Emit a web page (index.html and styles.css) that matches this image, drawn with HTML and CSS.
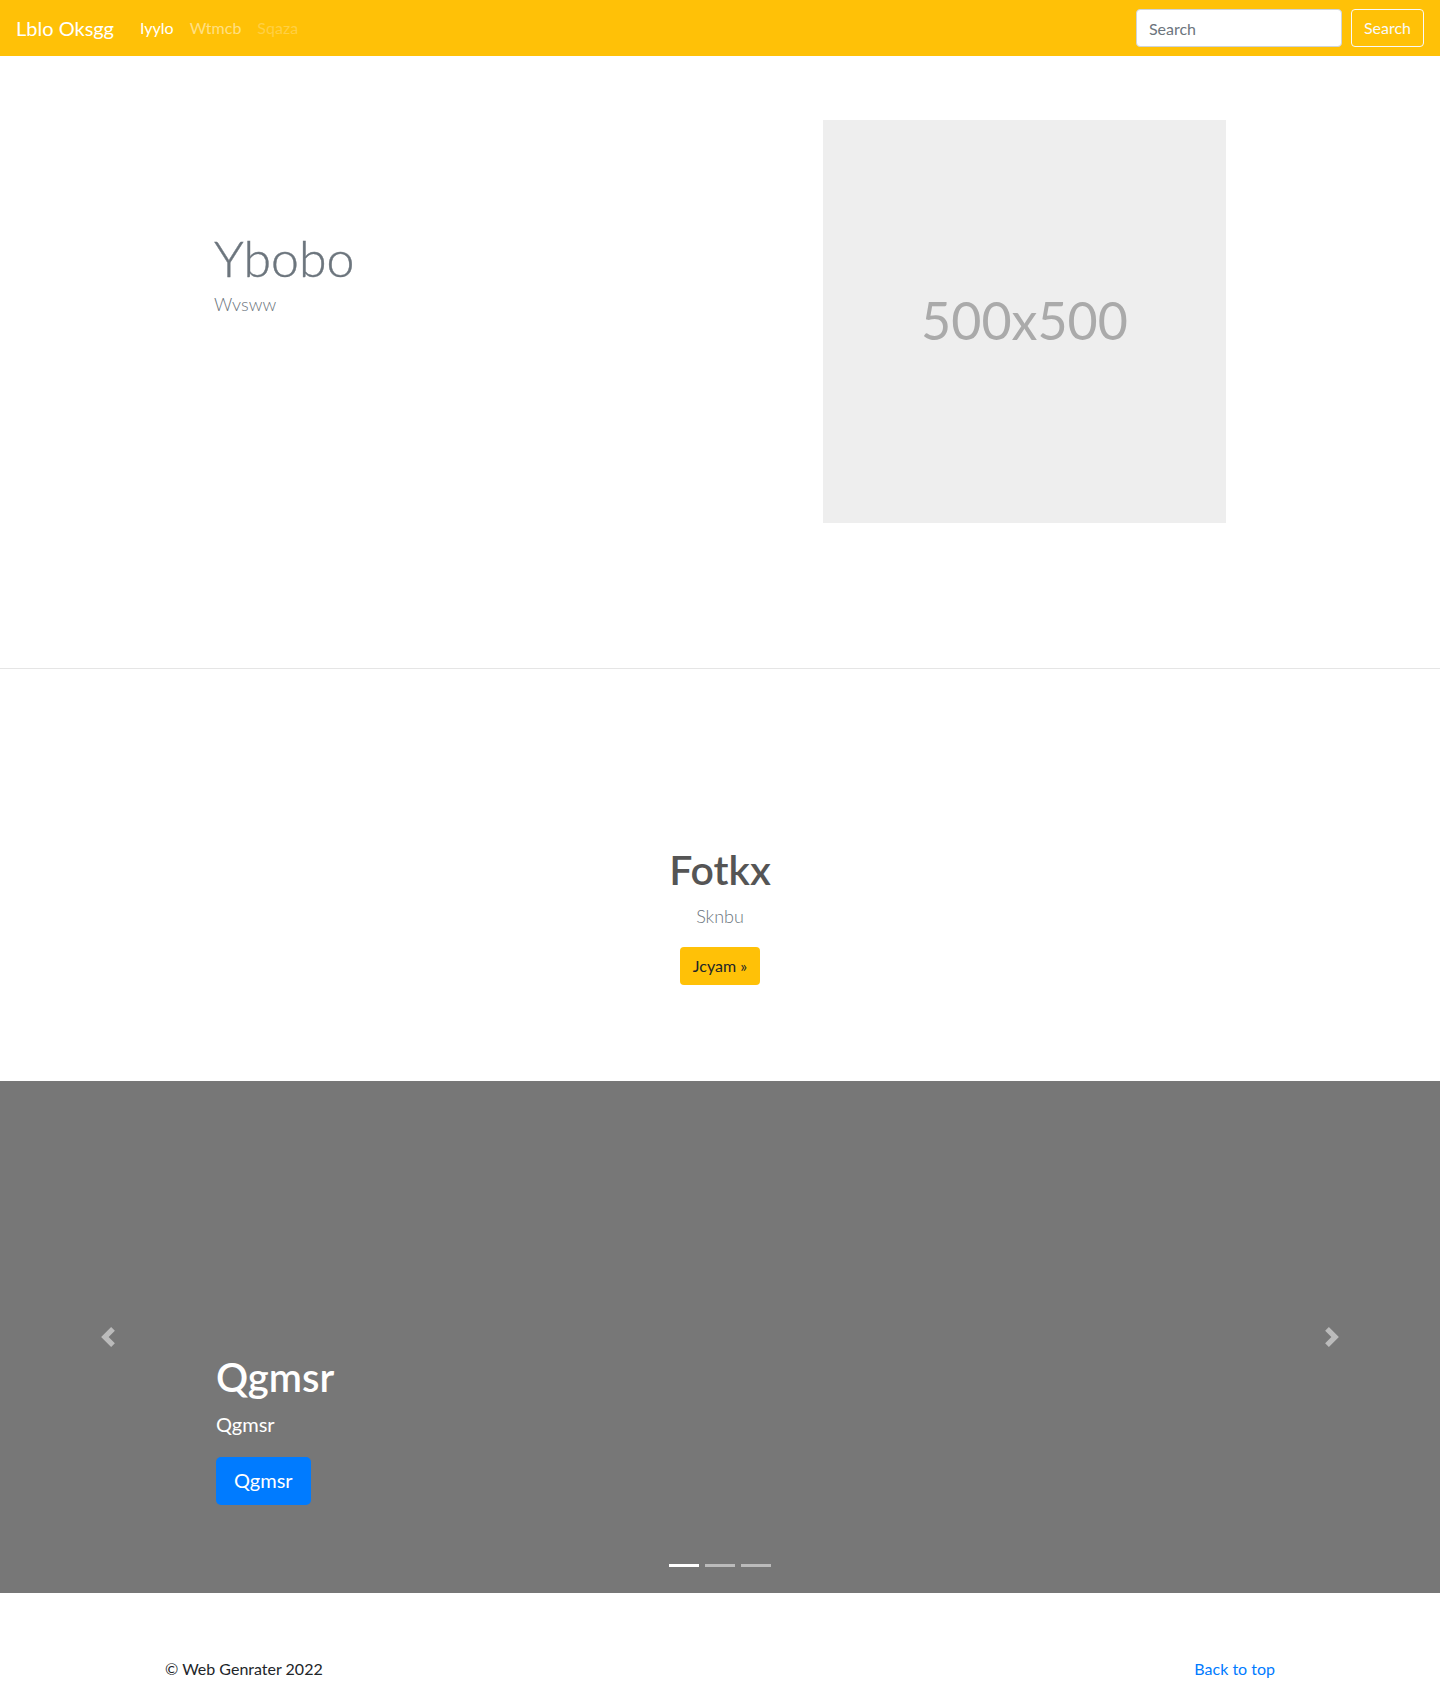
FILE: index.html
```html
<!DOCTYPE html>
<html lang="en">
<head>
<meta charset="utf-8">
<title>Lblo Oksgg</title>
<link rel="stylesheet" href="styles.css">
</head>
<body>
<nav class="navbar">
  <a class="brand" href="#">Lblo Oksgg</a>
  <ul class="nav">
    <li><a class="nav-link active" href="#">Iyylo</a></li>
    <li><a class="nav-link" href="#">Wtmcb</a></li>
    <li><a class="nav-link disabled" href="#">Sqaza</a></li>
  </ul>
  <form class="search">
    <input class="search-input" type="text" placeholder="Search">
    <button class="search-btn" type="button">Search</button>
  </form>
</nav>

<section class="hero">
  <div class="hero-text">
    <h1 class="hero-title">Ybobo</h1>
    <p class="hero-lead">Wvsww</p>
  </div>
  <div class="placeholder">500x500</div>
</section>

<section class="feature">
  <h1 class="feature-title">Fotkx</h1>
  <p class="feature-lead">Sknbu</p>
  <a class="btn-warning" href="#">Jcyam &raquo;</a>
</section>

<section class="carousel">
  <a class="control control-prev" href="#">
    <svg width="20" height="20" viewBox="0 0 8 8" fill="#fff"><path d="M5.25 0l-4 4 4 4 1.5-1.5L4.25 4l2.5-2.5L5.25 0z"/></svg>
  </a>
  <a class="control control-next" href="#">
    <svg width="20" height="20" viewBox="0 0 8 8" fill="#fff"><path d="M2.75 0l-1.5 1.5L3.75 4l-2.5 2.5L2.75 8l4-4-4-4z"/></svg>
  </a>
  <div class="caption">
    <h1 class="caption-title">Qgmsr</h1>
    <p class="caption-lead">Qgmsr</p>
    <p class="caption-action"><a class="btn-primary" href="#">Qgmsr</a></p>
  </div>
  <ol class="indicators">
    <li class="indicator active"></li>
    <li class="indicator"></li>
    <li class="indicator"></li>
  </ol>
</section>

<footer class="footer">
  <p class="copy">&copy; Web Genrater 2022</p>
  <p class="top-link"><a href="#">Back to top</a></p>
</footer>
</body>
</html>
```

FILE: styles.css
```css
* { box-sizing: border-box; }
html, body { margin: 0; padding: 0; }
body {
  font-family: Lato, "Open Sans", "Liberation Sans", sans-serif;
  font-size: 16px;
  line-height: 1.5;
  color: #212529;
  background: #fff;
}
a { text-decoration: none; }

/* navbar */
.navbar {
  height: 56px;
  background: #ffc107;
  display: flex;
  align-items: center;
  padding: 0 16px;
}
.brand {
  color: #fff;
  font-size: 20px;
  line-height: 30px;
  padding: 5px 0;
  margin-right: 18px;
}
.nav {
  list-style: none;
  margin: 0;
  padding: 0;
  display: flex;
}
.nav-link {
  display: block;
  padding: 8px;
  color: rgba(255,255,255,.5);
}
.nav-link.active { color: #fff; }
.nav-link.disabled { color: rgba(255,255,255,.25); }
.search {
  margin-left: auto;
  display: flex;
  align-items: center;
}
.search-input {
  width: 206px;
  height: 38px;
  padding: 6px 12px;
  border: 1px solid #ced4da;
  border-radius: 4px;
  font-family: inherit;
  font-size: 16px;
  color: #495057;
  background: #fff;
}
.search-input::placeholder { color: #6c757d; }
.search-btn {
  margin-left: 9px;
  height: 38px;
  padding: 6px 12px;
  border: 1px solid #f8f9fa;
  border-radius: 4px;
  background: transparent;
  color: #f8f9fa;
  font-family: inherit;
  font-size: 16px;
  line-height: 24px;
}

/* hero */
.hero {
  display: flex;
  align-items: flex-start;
  padding: 64px 214px 145px;
  border-bottom: 1px solid #e5e5e5;
}
.hero-text {
  flex: 1;
  padding-top: 108px;
}
.hero-title {
  margin: 0 0 2px;
  font-size: 50px;
  font-weight: 300;
  line-height: 1.2;
  color: #6c757d;
  -webkit-text-stroke: 0.4px #6c757d;
}
.hero-lead {
  margin: 0;
  font-size: 18px;
  font-weight: 300;
  line-height: 1.6;
  color: #6c757d;
}
.placeholder {
  width: 403px;
  height: 403px;
  background: #eee;
  color: #aaa;
  font-size: 52px;
  display: flex;
  align-items: center;
  justify-content: center;
  padding-bottom: 4px;
}

/* feature */
.feature {
  text-align: center;
  padding: 176px 0 96px;
}
.feature-title {
  margin: 0 0 9px;
  font-size: 41px;
  font-weight: 600;
  line-height: 1.2;
  color: #555;
}
.feature-lead {
  margin: 0 0 17px;
  font-size: 18px;
  font-weight: 300;
  line-height: 1.5;
  color: #6c757d;
}
.btn-warning {
  display: inline-block;
  height: 38px;
  padding: 6px 13px;
  border-radius: 4px;
  background: #ffc107;
  color: #212529;
  font-size: 16px;
  line-height: 26px;
}

/* carousel */
.carousel {
  position: relative;
  height: 512px;
  background: #777;
  margin-bottom: 64px;
}
.control {
  position: absolute;
  top: 0;
  bottom: 0;
  width: 15%;
  display: flex;
  align-items: center;
  justify-content: center;
  opacity: .5;
}
.control-prev { left: 0; }
.control-next { right: 0; }
.control svg { display: block; }
.caption {
  position: absolute;
  left: 15%;
  right: 15%;
  bottom: 48px;
  padding: 20px 0;
  color: #fff;
}
.caption-title {
  margin: 0 0 8px;
  font-size: 40px;
  font-weight: 600;
  line-height: 1.2;
}
.caption-lead {
  margin: 0 0 18px;
  font-size: 20px;
  line-height: 1.5;
}
.caption-action {
  margin: 0 0 20px;
  display: flex;
}
.btn-primary {
  display: inline-block;
  height: 48px;
  padding: 8px 18px;
  border-radius: 5px;
  background: #007bff;
  color: #fff;
  font-size: 20px;
  line-height: 30px;
}
.indicators {
  position: absolute;
  left: 0;
  right: 0;
  bottom: 0;
  margin: 0 0 16px;
  padding: 0;
  list-style: none;
  display: flex;
  justify-content: center;
}
.indicator {
  width: 30px;
  height: 3px;
  margin: 10px 3px;
  background: rgba(255,255,255,.5);
}
.indicator.active { background: #fff; }

/* footer */
.footer {
  width: 1140px;
  margin: 0 auto;
  padding: 0 15px;
  display: flex;
  justify-content: space-between;
}
.footer p { margin: 0 0 16px; }
.top-link a { color: #007bff; }
```
